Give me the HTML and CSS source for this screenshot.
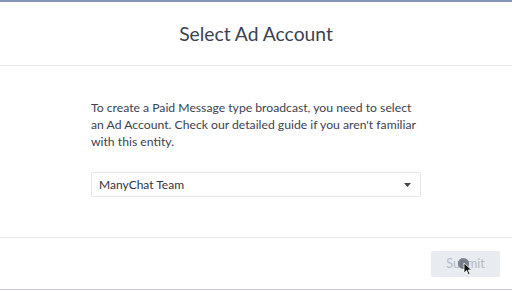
FILE: index.html
```html
<!DOCTYPE html>
<html>
<head>
<meta charset="utf-8">
<link rel="stylesheet" href="styles.css">
</head>
<body>
<div class="modal">
  <div class="modal-header">
    <h1 class="modal-title">Select Ad Account</h1>
  </div>
  <div class="modal-body">
    <p class="modal-text">To create a Paid Message type broadcast, you need to select<br>an Ad Account. Check our detailed guide if you aren't familiar<br>with this entity.</p>
    <div class="select">
      <span class="select-value">ManyChat Team</span>
      <svg class="select-caret" width="7" height="4" viewBox="0 0 7 4"><path d="M0 0H7L3.5 4Z" fill="#3d4350"/></svg>
    </div>
  </div>
  <div class="modal-footer">
    <button class="btn-submit">Submit</button>
  </div>
</div>
<div class="cursor">
  <span class="click-dot"></span>
  <svg class="arrow" width="10" height="14" viewBox="0 0 10 14"><path d="M1 1V11L3.5 8.6L5.4 12.8L7 12.1L5.2 8H8.6Z" fill="#111" stroke="#fff" stroke-width="0.8"/></svg>
</div>
</body>
</html>
```
FILE: styles.css
```css
html, body {
  margin: 0;
  padding: 0;
  background: #fff;
}
body {
  width: 512px;
  height: 291px;
  overflow: hidden;
  position: relative;
  font-family: Lato, "Liberation Sans", sans-serif;
}
.modal {
  height: 290px;
  box-sizing: border-box;
  border-top: 2px solid #8497bb;
  border-bottom: 1px solid #c3cbe0;
  display: flex;
  flex-direction: column;
}
.modal-header {
  height: 63px;
  border-bottom: 1px solid #e6e8ec;
  display: flex;
  align-items: center;
  justify-content: center;
}
.modal-title {
  margin: 0;
  font-size: 19.3px;
  font-weight: 400;
  color: #3c4250;
}
.modal-body {
  height: 172px;
  border-bottom: 1px solid #e6e8ec;
  padding: 33px 91px 0;
  box-sizing: border-box;
}
.modal-text {
  margin: 0 -30px 0 0;
  font-size: 12.2px;
  line-height: 17px;
  color: #3c4250;
  white-space: nowrap;
}
.select {
  margin-top: 22px;
  height: 25px;
  box-sizing: border-box;
  border: 1px solid #e3e6ea;
  border-radius: 2px;
  display: flex;
  align-items: center;
  justify-content: space-between;
  padding: 0 9px 0 7px;
}
.select-value {
  font-size: 12px;
  color: #2f3440;
}
.select-caret {
  display: block;
}
.modal-footer {
  flex: 1;
  display: flex;
  justify-content: flex-end;
  align-items: center;
  padding-right: 12px;
}
.btn-submit {
  width: 69px;
  height: 26px;
  border: none;
  border-radius: 2px;
  background: #e8ebef;
  color: #b3bac5;
  font-family: Lato, "Liberation Sans", sans-serif;
  font-size: 12.5px;
  padding: 0;
}
.cursor {
  position: absolute;
  left: 458px;
  top: 258px;
  width: 16px;
  height: 20px;
}
.click-dot {
  position: absolute;
  left: 0;
  top: 0;
  width: 11px;
  height: 11px;
  border-radius: 50%;
  background: rgba(90, 98, 112, 0.75);
}
.arrow {
  position: absolute;
  left: 5px;
  top: 4px;
}
```
